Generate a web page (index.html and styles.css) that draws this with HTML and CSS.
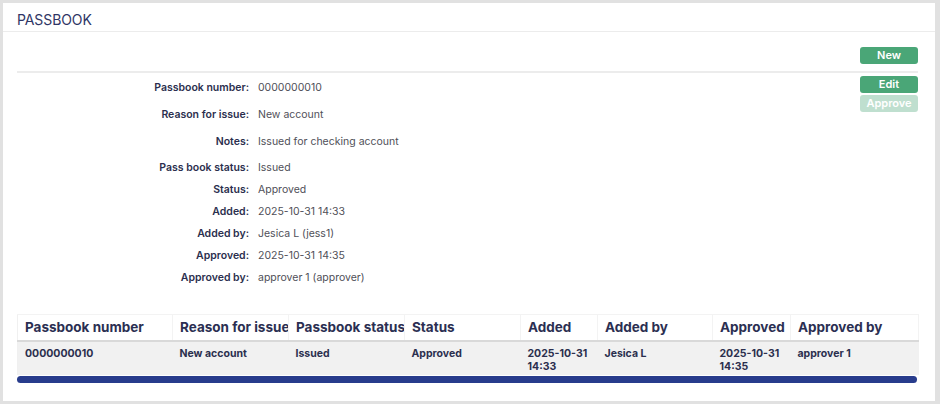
FILE: index.html
```html
<!DOCTYPE html>
<html lang="en">
<head>
<meta charset="utf-8">
<title>Passbook</title>
<link rel="stylesheet" href="styles.css">
</head>
<body>
<div class="frame">
  <div class="panel">
    <div class="panel-header"><h1 class="title">PASSBOOK</h1></div>
    <div class="content">
      <div class="toolbar"><button class="btn">New</button></div>
      <div class="divider"></div>
      <div class="detail-area">
        <div class="details">
          <div class="group group-wide">
            <div class="row"><span class="label">Passbook number:</span><span class="value">0000000010</span></div>
            <div class="row"><span class="label">Reason for issue:</span><span class="value">New account</span></div>
            <div class="row"><span class="label">Notes:</span><span class="value">Issued for checking account</span></div>
          </div>
          <div class="group group-tight">
            <div class="row"><span class="label">Pass book status:</span><span class="value">Issued</span></div>
            <div class="row"><span class="label">Status:</span><span class="value">Approved</span></div>
            <div class="row"><span class="label">Added:</span><span class="value">2025-10-31 14:33</span></div>
            <div class="row"><span class="label">Added by:</span><span class="value">Jesica L (jess1)</span></div>
            <div class="row"><span class="label">Approved:</span><span class="value">2025-10-31 14:35</span></div>
            <div class="row"><span class="label">Approved by:</span><span class="value">approver 1 (approver)</span></div>
          </div>
        </div>
        <div class="actions">
          <button class="btn">Edit</button>
          <button class="btn btn-disabled" disabled>Approve</button>
        </div>
      </div>
      <div class="table-wrap">
        <table class="grid">
          <colgroup>
            <col class="c155"><col class="c116"><col class="c116"><col class="c116"><col class="c77"><col class="c115"><col class="c78"><col class="c128">
          </colgroup>
          <thead>
            <tr>
              <th>Passbook number</th>
              <th>Reason for issue</th>
              <th>Passbook status</th>
              <th>Status</th>
              <th>Added</th>
              <th>Added by</th>
              <th>Approved</th>
              <th>Approved by</th>
            </tr>
          </thead>
          <tbody>
            <tr>
              <td>0000000010</td>
              <td>New account</td>
              <td>Issued</td>
              <td>Approved</td>
              <td>2025-10-31 14:33</td>
              <td>Jesica L</td>
              <td>2025-10-31 14:35</td>
              <td>approver 1</td>
            </tr>
          </tbody>
        </table>
        <div class="scrollbar"></div>
      </div>
    </div>
  </div>
</div>
</body>
</html>
```

FILE: styles.css
```css
* { box-sizing: border-box; }
html, body { margin: 0; padding: 0; }
body {
  width: 940px;
  height: 404px;
  background: #e1e1e1;
  font-family: Inter, "Noto Sans", "Liberation Sans", sans-serif;
  overflow: hidden;
}
.frame {
  height: 404px;
  padding: 3px 5px 3px 3px;
}
.panel {
  background: #ffffff;
  height: 398px;
}
.panel-header {
  height: 29px;
  border-bottom: 1px solid #ececec;
  padding: 9px 0 0 14px;
}
.title {
  margin: 0;
  font-size: 14px;
  line-height: 16px;
  font-weight: 400;
  color: #2f3565;
  letter-spacing: -0.1px;
}
.content {
  padding: 0 17px 0 14px;
}
.toolbar {
  display: flex;
  justify-content: flex-end;
  padding-top: 15px;
}
.btn {
  width: 58px;
  height: 17px;
  border: none;
  border-radius: 3px;
  background: #4aa677;
  color: #ffffff;
  font-family: inherit;
  font-size: 11px;
  font-weight: 600;
  line-height: 17px;
  padding: 0;
  cursor: pointer;
}
.btn-disabled {
  opacity: 0.35;
  cursor: default;
}
.divider {
  margin-top: 7px;
  border-top: 2px solid #ececec;
}
.detail-area {
  display: flex;
  justify-content: space-between;
}
.details {
  padding-top: 1px;
}
.group-tight {
  margin-top: 2px;
}
.row {
  display: flex;
  align-items: center;
  font-size: 10.5px;
  line-height: 14px;
}
.group-wide .row { height: 27px; }
.group-tight .row { height: 22px; }
.label {
  width: 232px;
  text-align: right;
  font-weight: 600;
  color: #2b2f4e;
}
.value {
  margin-left: 9px;
  color: #4f4f58;
}
.actions {
  display: flex;
  flex-direction: column;
  gap: 2px;
  padding-top: 3px;
}
.table-wrap {
  margin-top: 25px;
}
.grid {
  width: 901px;
  table-layout: fixed;
  border-collapse: collapse;
  border-left: 1px solid #f0f0f0;
}
.c155 { width: 155px; }
.c116 { width: 116px; }
.c115 { width: 115px; }
.c77 { width: 77px; }
.c78 { width: 78px; }
.c128 { width: 128px; }
.grid th {
  height: 26px;
  padding: 0 0 0 7px;
  text-align: left;
  font-size: 13.5px;
  font-weight: 700;
  color: #2b2f52;
  white-space: nowrap;
  overflow: hidden;
  border-right: 1px solid #f3f3f3;
  border-top: 1px solid #f3f3f3;
  border-bottom: 2px solid #d9d9d9;
  vertical-align: middle;
}
.grid td {
  height: 34px;
  background: #f1f1f1;
  padding: 5px 4px 0 7px;
  vertical-align: top;
  font-size: 10.5px;
  line-height: 13px;
  font-weight: 700;
  color: #2b2f4e;
}
.scrollbar {
  height: 7px;
  width: 900px;
  margin-top: 1px;
  background: #283c8c;
  border-radius: 4px;
}
```
